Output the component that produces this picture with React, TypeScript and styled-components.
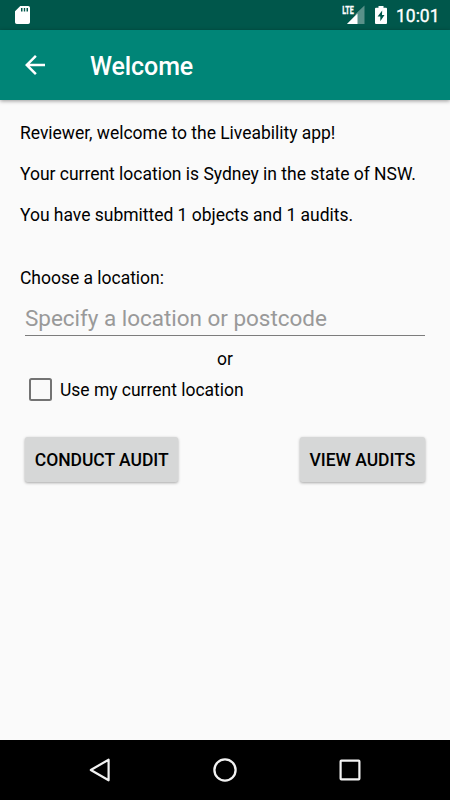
import React from "react";
import styled, { createGlobalStyle } from "styled-components";

const GlobalStyle = createGlobalStyle`
  * { box-sizing: border-box; }
  body { margin: 0; background: #fafafa; }
`;

const Screen = styled.div`
  display: flex;
  flex-direction: column;
  width: 450px;
  height: 800px;
  overflow: hidden;
  background: #fafafa;
  color: #000;
  font-family: Roboto, "Liberation Sans", sans-serif;
  font-size: 17.5px;
  line-height: 20.5px;
  letter-spacing: -0.02px;
`;

const StatusBar = styled.header`
  display: flex;
  align-items: center;
  justify-content: space-between;
  flex: none;
  height: 30px;
  padding: 0 10.5px 0 15px;
  background: #00574b;
  color: #fff;
`;

const StatusIcons = styled.div`
  display: flex;
  align-items: center;
`;

const SystemIcons = styled.div`
  display: flex;
  align-items: center;
  gap: 10px;
`;

const Clock = styled.time`
  margin: 2px 0 0 9.5px;
  font-weight: 400;
  font-size: 17.5px;
  -webkit-text-stroke: 0.35px #fff;
`;

const Icon = styled.svg`
  display: block;
  flex: none;
`;

const Toolbar = styled.div`
  display: flex;
  align-items: center;
  flex: none;
  z-index: 1;
  height: 70px;
  padding-left: 20px;
  background: #008577;
  color: #fff;
  box-shadow: 0 1px 4px rgba(0, 0, 0, 0.4);
`;

const IconButton = styled.button`
  display: flex;
  padding: 0;
  border: 0;
  background: none;
  color: inherit;
`;

const Title = styled.h1`
  margin: 3px 0 0 40px;
  font-size: 25px;
  line-height: 30px;
  font-weight: 500;
  letter-spacing: -0.1px;
`;

const Content = styled.main`
  display: flex;
  flex-direction: column;
  flex: 1;
  padding: 23px 20px 0;
`;

const Messages = styled.section`
  display: flex;
  flex-direction: column;
  gap: 20.5px;
`;

const Paragraph = styled.p`
  margin: 0;
  white-space: nowrap;
`;

const FieldLabel = styled.label`
  margin-top: 42.5px;
`;

const LocationInput = styled.input`
  height: 36px;
  margin: 11px 5px 0;
  padding: 2px 0 0;
  border: 0;
  border-bottom: 1px solid #7c7c7c;
  border-radius: 0;
  outline: 0;
  background: transparent;
  font: 22.5px/27px Roboto, "Liberation Sans", sans-serif;
  letter-spacing: -0.03px;
  &::placeholder { color: #999; opacity: 1; }
`;

const Separator = styled.p`
  margin: 13px 0 0;
  text-align: center;
`;

const CheckRow = styled.label`
  display: flex;
  align-items: center;
  height: 40px;
  margin-top: 1px;
  padding-left: 8px;
  gap: 8px;
`;

const CheckText = styled.span`
  padding-top: 1px;
`;

const Checkbox = styled.input`
  appearance: none;
  width: 23px;
  height: 23px;
  margin: 0 0 1px 1px;
  border: 2px solid #737373;
  border-radius: 2.5px;
`;

const Actions = styled.div`
  display: flex;
  justify-content: space-between;
  margin: 27px 5px 0;
`;

const Button = styled.button`
  height: 45px;
  padding: 2px 9.75px 0;
  border: 0;
  border-radius: 2.5px;
  background: #d6d7d7;
  color: #000;
  box-shadow: 0 1px 3px rgba(0, 0, 0, 0.34);
  font: 500 17.5px/20.5px Roboto, "Liberation Sans", sans-serif;
  letter-spacing: -0.03px;
  text-transform: uppercase;
  white-space: nowrap;
`;

const NavBar = styled.nav`
  display: flex;
  justify-content: center;
  align-items: center;
  gap: 95px;
  flex: none;
  height: 60px;
  background: #000;
  color: #f2f2f2;
`;

const SdCardIcon = () => (
  <Icon width="15" height="20" viewBox="0 0 15 20">
    <path fill="#fff" fillRule="evenodd" d="M5.3 1H13.2Q15 1 15 2.8V17.2Q15 19 13.2 19H1.8Q0 19 0 17.2V6.3ZM6 3V6.5H7.5V3ZM8.8 3V6.5H10.2V3ZM11.5 3V6.5H13V3Z" />
  </Icon>
);

const SignalIcon = () => (
  <Icon width="24" height="22" viewBox="0 0 24 22">
    <path fill="#fff" fillOpacity=".35" d="M23.5 1.5V20H6L14.5 11V10Z" />
    <path fill="#fff" d="M16.5 9.5V20H6Z" />
    <text x="1.2" y="9.8" fill="#fff" stroke="#fff" strokeWidth="0.3" fontFamily="Roboto" fontWeight="700" fontSize="11" textLength="11.5" lengthAdjust="spacingAndGlyphs">LTE</text>
  </Icon>
);

const BatteryIcon = () => (
  <Icon width="12" height="18" viewBox="0 0 12 18">
    <path fill="#fff" fillRule="evenodd" d="M3.5 0H8.5V1.8H11Q12 1.8 12 2.8V17Q12 18 11 18H1Q0 18 0 17V2.8Q0 1.8 1 1.8H3.5ZM7.2 4.5L2.6 10.5H5.3V15.3L9.5 9H7Z" />
  </Icon>
);

export default function App() {
  return (
    <Screen>
      <GlobalStyle />
      <StatusBar>
        <SdCardIcon />
        <StatusIcons>
          <SystemIcons>
            <SignalIcon />
            <BatteryIcon />
          </SystemIcons>
          <Clock>10:01</Clock>
        </StatusIcons>
      </StatusBar>
      <Toolbar>
        <IconButton aria-label="Back">
          <Icon width="30" height="30" viewBox="0 0 24 24">
            <path fill="currentColor" d="M20 11H7.83l5.59-5.59L12 4l-8 8 8 8 1.41-1.41L7.83 13H20v-2z" />
          </Icon>
        </IconButton>
        <Title>Welcome</Title>
      </Toolbar>
      <Content>
        <Messages>
          <Paragraph>Reviewer, welcome to the Liveability app!</Paragraph>
          <Paragraph>Your current location is Sydney in the state of NSW.</Paragraph>
          <Paragraph>You have submitted 1 objects and 1 audits.</Paragraph>
        </Messages>
        <FieldLabel htmlFor="location">Choose a location:</FieldLabel>
        <LocationInput id="location" placeholder="Specify a location or postcode" />
        <Separator>or</Separator>
        <CheckRow>
          <Checkbox type="checkbox" />
          <CheckText>Use my current location</CheckText>
        </CheckRow>
        <Actions>
          <Button>Conduct audit</Button>
          <Button>View audits</Button>
        </Actions>
      </Content>
      <NavBar>
        <IconButton aria-label="Navigate back">
          <Icon width="30" height="30" viewBox="0 0 30 30">
            <path d="M5.8 15L23.6 4.7V25.3Z" fill="none" stroke="currentColor" strokeWidth="2.2" strokeLinejoin="round" />
          </Icon>
        </IconButton>
        <IconButton aria-label="Home">
          <Icon width="30" height="30" viewBox="0 0 30 30">
            <circle cx="15" cy="15" r="10.6" fill="none" stroke="currentColor" strokeWidth="2.3" />
          </Icon>
        </IconButton>
        <IconButton aria-label="Recent apps">
          <Icon width="30" height="30" viewBox="0 0 30 30">
            <rect x="5.6" y="5.6" width="18.8" height="18.8" rx="0.8" fill="none" stroke="currentColor" strokeWidth="2.2" />
          </Icon>
        </IconButton>
      </NavBar>
    </Screen>
  );
}
